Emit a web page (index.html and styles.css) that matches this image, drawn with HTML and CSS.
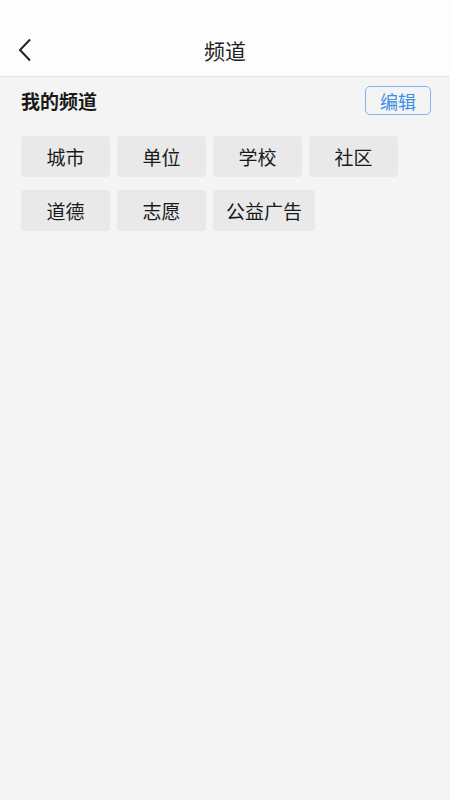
FILE: index.html
```html
<!DOCTYPE html>
<html lang="zh">
<head>
<meta charset="utf-8">
<link rel="stylesheet" href="styles.css">
</head>
<body>
<div class="header">
  <div class="back">
    <svg width="14" height="24" viewBox="0 0 14 24"><path d="M12 1.5 L2 12 L12 22.5" fill="none" stroke="#222" stroke-width="2"/></svg>
  </div>
  <div class="title">频道</div>
</div>
<div class="section">
  <div class="section-title">我的频道</div>
  <div class="edit">编辑</div>
</div>
<div class="chips">
  <div class="chip">城市</div>
  <div class="chip">单位</div>
  <div class="chip">学校</div>
  <div class="chip">社区</div>
  <div class="chip">道德</div>
  <div class="chip">志愿</div>
  <div class="chip">公益广告</div>
</div>
</body>
</html>
```
FILE: styles.css
```css
html, body {
  margin: 0;
  padding: 0;
  height: 100%;
  background: #f4f4f4;
  font-family: "Noto Sans CJK SC", "Noto Sans", sans-serif;
}
.header {
  height: 76px;
  background: #fdfdfd;
  border-bottom: 1px solid #e3e3e3;
  position: relative;
  display: flex;
  align-items: flex-end;
  justify-content: center;
}
.back {
  position: absolute;
  left: 18px;
  top: 38px;
  width: 14px;
  height: 24px;
}
.back svg { display: block; }
.title {
  font-size: 21px;
  color: #222;
  line-height: 28px;
  margin-bottom: 12px;
}
.section {
  display: flex;
  justify-content: space-between;
  align-items: center;
  padding: 9px 19px 0 21px;
  height: 29px;
}
.section-title {
  font-size: 19px;
  font-weight: bold;
  color: #1a1a1a;
}
.edit {
  width: 64px;
  height: 27px;
  border: 1px solid #7fb5f2;
  border-radius: 5px;
  color: #3b8fe8;
  font-size: 18px;
  display: flex;
  align-items: center;
  justify-content: center;
  line-height: 1;
}
.chips {
  display: flex;
  flex-wrap: wrap;
  gap: 13px 7px;
  padding: 21px 21px 0 21px;
}
.chip {
  min-width: 89px;
  height: 41px;
  box-sizing: border-box;
  padding: 0 13px;
  background: #e9e9e9;
  border-radius: 4px;
  font-size: 19px;
  color: #1a1a1a;
  display: flex;
  align-items: center;
  justify-content: center;
}
```
